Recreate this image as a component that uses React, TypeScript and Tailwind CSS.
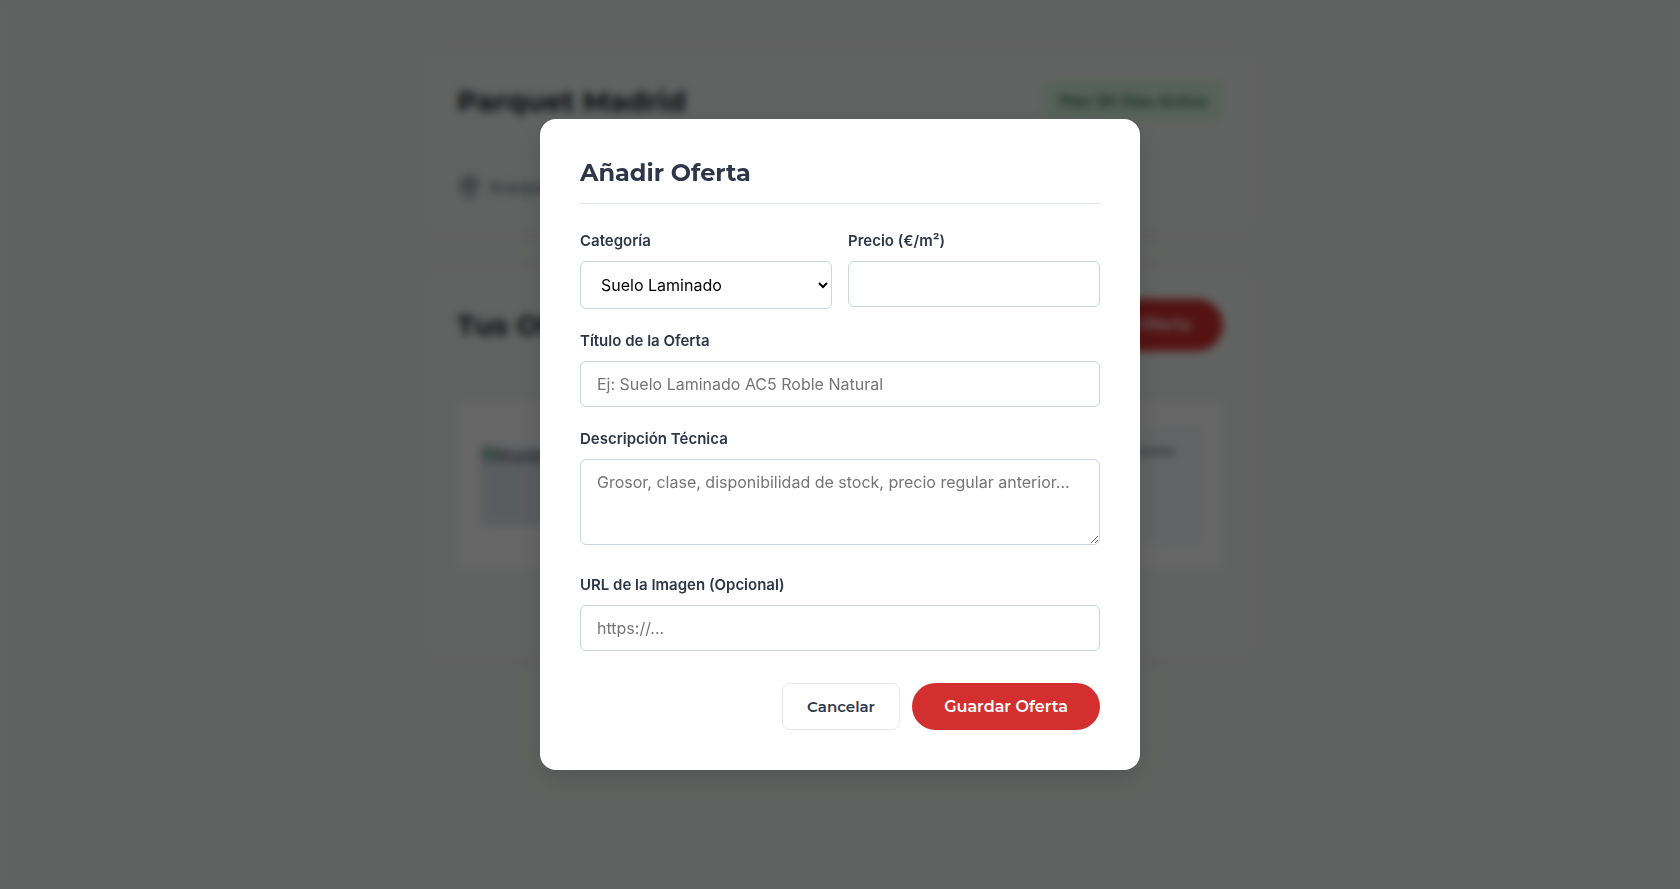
import type { ReactNode } from 'react';
import { Image, MapPin } from 'lucide-react';

const inputClass =
  'block w-full rounded-md border border-[#cbd5e0] bg-white px-4 py-3 text-base leading-5 text-black placeholder:text-[#757575]';

type FieldProps = {
  id: string;
  label: string;
  children: ReactNode;
};

const Field = ({ id, label, children }: FieldProps) => (
  <div className="flex flex-col gap-2">
    <label htmlFor={id} className="text-[15px] leading-6 font-semibold text-[#2d3748]">
      {label}
    </label>
    {children}
  </div>
);

const Card = ({ children }: { children: ReactNode }) => (
  <section className="rounded-2xl border border-[#d2bcc6] bg-[#f2f7f4] px-9 pt-8 pb-9 shadow-[0_0_8px_rgba(60,20,30,0.05)]">
    {children}
  </section>
);

const Dashboard = () => (
  <main className="mx-auto flex w-full max-w-[840px] flex-col gap-[30px] pt-12">
    <Card>
      <div className="flex items-center justify-between">
        <h1 className="font-[Montserrat,Inter,sans-serif] text-[28px] leading-9 font-bold text-[#1a202c]">
          Parquet Madrid
        </h1>
        <span className="rounded-md bg-[#d8f5e0] px-4 py-2 text-base leading-6 font-medium text-[#276749]">
          Plan 90 Días Activo
        </span>
      </div>
      <p className="mt-[54px] flex items-center gap-2 text-base leading-6 text-[#4a5568]">
        <MapPin className="size-6" />
        Aranjuez
      </p>
    </Card>
    <Card>
      <div className="flex items-center justify-between font-[Montserrat,Inter,sans-serif]">
        <h2 className="text-[28px] leading-9 font-bold text-[#1a202c]">Tus Ofertas</h2>
        <button type="button" className="rounded-full bg-[#d32f2f] px-8 py-4 text-base leading-5 font-semibold text-white">
          Añadir Oferta
        </button>
      </div>
      <article className="mt-[52px] mb-14 flex items-center justify-between rounded-md bg-white py-[22px] pr-5 pl-6">
        <div className="flex h-20 w-28 items-start rounded bg-[#e2e8f0] text-base leading-5 text-[#2d3748]">
          <Image className="size-4 text-[#2f855a]" />
          thumb
        </div>
        <div className="h-[121px] w-44 rounded-lg bg-[#f7fafc] px-7 py-4 text-right text-sm text-[#4a5568]">
          Descuento
        </div>
      </article>
    </Card>
  </main>
);

const OfferDialog = () => (
  <div className="fixed inset-0 flex items-center justify-center bg-black/60 backdrop-blur-xs">
    <div
      role="dialog"
      aria-modal="true"
      aria-labelledby="dialog-title"
      className="w-full max-w-[600px] rounded-2xl bg-white p-10 shadow-[0_10px_30px_rgba(0,0,0,0.15)]"
    >
      <h2
        id="dialog-title"
        className="mb-[25px] border-b border-[#e2e8f0] pb-4 font-[Montserrat,Inter,sans-serif] text-2xl leading-7 font-bold text-[#2d3748]"
      >
        Añadir Oferta
      </h2>
      <form className="flex flex-col gap-5">
        <div className="grid grid-cols-2 items-start gap-4">
          <Field id="category" label="Categoría">
            <select id="category" className="h-12 w-full rounded-md border border-[#cbd5e0] bg-white px-4 text-base text-black">
              <option>Suelo Laminado</option>
            </select>
          </Field>
          <Field id="price" label="Precio (€/m²)">
            <input id="price" type="text" inputMode="decimal" className={inputClass} />
          </Field>
        </div>
        <Field id="title" label="Título de la Oferta">
          <input id="title" type="text" placeholder="Ej: Suelo Laminado AC5 Roble Natural" className={inputClass} />
        </Field>
        <div className="pb-2">
          <Field id="description" label="Descripción Técnica">
            <textarea
              id="description"
              rows={3}
              placeholder="Grosor, clase, disponibilidad de stock, precio regular anterior..."
              className={inputClass}
            />
          </Field>
        </div>
        <Field id="image" label="URL de la Imagen (Opcional)">
          <input id="image" type="url" placeholder="https://..." className={inputClass} />
        </Field>
        <div className="mt-3 flex justify-end gap-3 font-[Montserrat,Inter,sans-serif]">
          <button
            type="button"
            className="min-w-[118px] rounded-lg border border-[#e8e8e8] bg-white px-6 text-[15px] leading-5 font-semibold text-[#2d3748]"
          >
            Cancelar
          </button>
          <button
            type="submit"
            className="h-[47px] min-w-[188px] rounded-full bg-[#d32f2f] px-8 text-base leading-5 font-semibold text-white"
          >
            Guardar Oferta
          </button>
        </div>
      </form>
    </div>
  </div>
);

export default function App() {
  return (
    <div className="min-h-screen bg-[#f1f6f3] font-[Inter,sans-serif]">
      <Dashboard />
      <OfferDialog />
    </div>
  );
}
